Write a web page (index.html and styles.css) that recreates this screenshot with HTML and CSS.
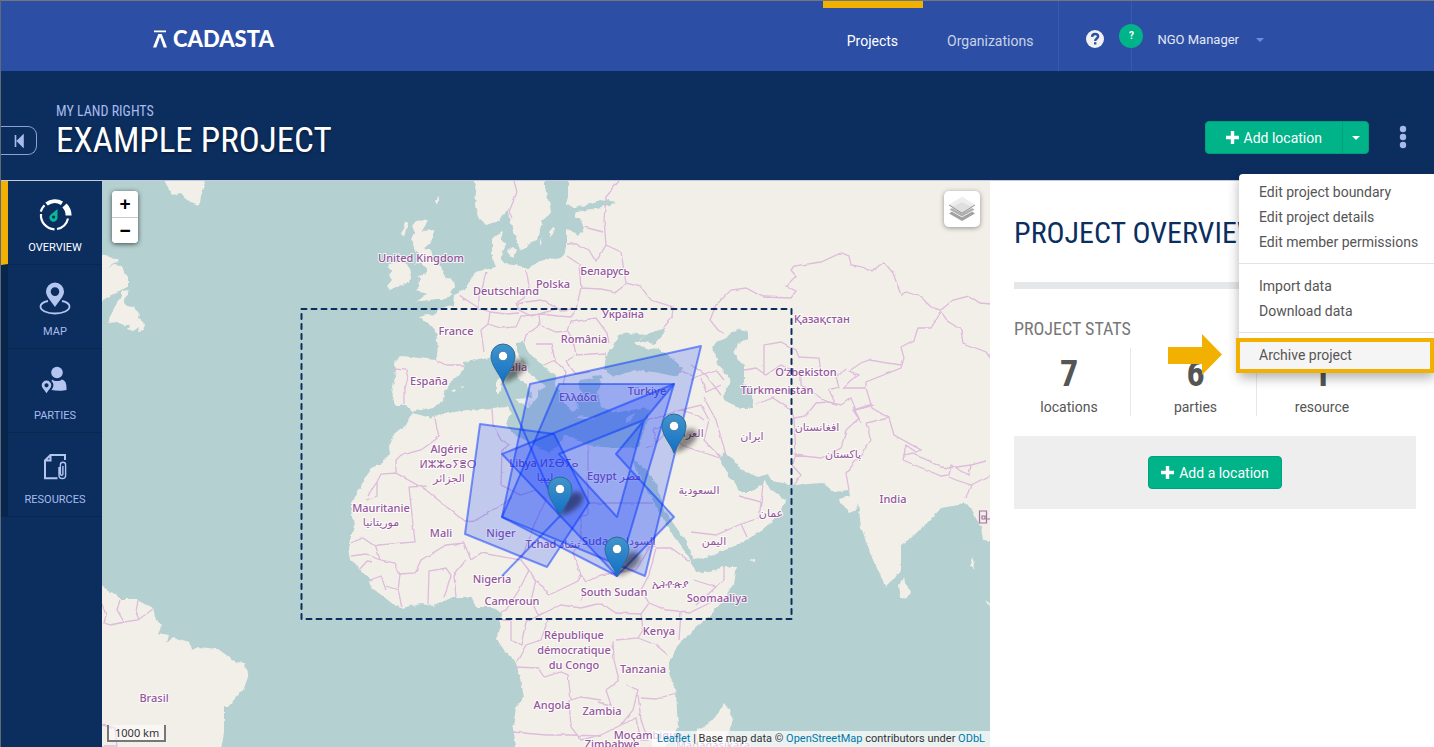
FILE: index.html
```html
<!DOCTYPE html>
<html lang="en">
<head>
<meta charset="utf-8">
<title>Example Project</title>
<link rel="stylesheet" href="styles.css">
</head>
<body>
<header class="topbar">
  <a class="logo" href="#">
    <svg width="14" height="18" viewBox="0 0 14 18" aria-hidden="true"><path d="M1 .5h12v1.800H1zM0 17.500 5.300 4h3.400L14 17.500h-3.300L7 7 3.300 17.500z" fill="#fff"/></svg>
    <span>CADASTA</span>
  </a>
  <nav class="nav">
    <a class="nav-link active" href="#">Projects</a>
    <a class="nav-link" href="#">Organizations</a>
    <a class="help" href="#" aria-label="Help"><svg width="18" height="18" viewBox="0 0 18 18"><circle cx="9" cy="9" r="9" fill="#f1f1f1"/><path d="M6 6.900C6.200 4.800 7.500 4 9.100 4c1.800 0 3 1 3 2.500C12.100 8.500 9.200 8.500 9.200 11" fill="none" stroke="#2c4fa5" stroke-width="2.400"/><path d="M8 12.200h2.400v2.300H8z" fill="#2c4fa5"/></svg></a>
    <a class="user" href="#"><span class="avatar">?</span><span class="user-name">NGO Manager</span><span class="caret"></span></a>
  </nav>
</header>

<section class="project-bar">
  <button class="collapse" aria-label="Collapse"><svg width="10" height="14" viewBox="0 0 10 14"><path d="M1.500 1v12M9 1.500 3.500 7 9 12.500z" fill="#a9bbec" stroke="#a9bbec" stroke-width="1.600"/></svg></button>
  <div class="project-title">
    <a class="org" href="#">MY LAND RIGHTS</a>
    <h1>EXAMPLE PROJECT</h1>
  </div>
  <div class="split">
    <button class="btn"><svg class="plus" width="13" height="13" viewBox="0 0 13 13"><path d="M6.500 0v13M0 6.500h13" stroke="#fff" stroke-width="3.400"/></svg>Add location</button>
    <button class="btn toggle" aria-label="More locations"><span class="caret white"></span></button>
  </div>
  <button class="more" aria-label="Project options"><svg width="8" height="24" viewBox="0 0 8 24" fill="#a9b8ea"><circle cx="4" cy="4" r="3.200"/><circle cx="4" cy="12" r="3.200"/><circle cx="4" cy="20" r="3.200"/></svg></button>
  <div class="menu">
    <a href="#">Edit project boundary</a>
    <a href="#">Edit project details</a>
    <a href="#">Edit member permissions</a>
    <hr>
    <a href="#">Import data</a>
    <a href="#">Download data</a>
    <hr>
    <a class="archive" href="#">Archive project</a>
    <svg class="arrow" width="56" height="42" viewBox="0 0 56 42"><path d="M0 13h34V0l20 20.500L34 41V30H0z" fill="#f2b100"/></svg>
  </div>
</section>

<main class="main">
  <nav class="side">
    <a class="side-link active" href="#">
      <svg width="36" height="36" viewBox="0 0 36 36" fill="none" stroke="#fff" stroke-width="2.200"><path d="M3.800 14.600A14.600 14.600 0 0 1 7.500 8.200" stroke-width="2.200"/><path d="M9.500 7A14 14 0 0 1 25 6.200" stroke-width="4"/><path d="M27.500 8.500A14 14 0 0 1 31.600 18.500" stroke-width="6"/><path d="M31 21.500A14 14 0 0 1 20 32M17.500 32.300A14 14 0 0 1 4 17"/><path d="M20.500 12v8.500a4.100 4.100 0 1 1-7.200-2.600z" fill="#0cb795" stroke="none"/><circle cx="16.600" cy="20" r="1.600" fill="#0b2e5f" stroke="none"/></svg>
      <span>OVERVIEW</span>
    </a>
    <a class="side-link" href="#">
      <svg width="36" height="36" viewBox="0 0 36 36"><path fill-rule="evenodd" d="M18 1.500a9 9 0 0 1 9 9c0 5-5.500 10-9 15.500-3.500-5.500-9-10.500-9-15.500a9 9 0 0 1 9-9zm0 4.800a4.300 4.300 0 1 0 0 8.600 4.300 4.300 0 0 0 0-8.600z" fill="#b4c5f0"/><path d="M11 20c-4.500 1-7.500 3-7.500 5.500 0 4 6.500 7 14.500 7s14.500-3 14.500-7c0-2.500-3-4.500-7.500-5.500" fill="none" stroke="#b4c5f0" stroke-width="1.800"/></svg>
      <span>MAP</span>
    </a>
    <a class="side-link" href="#">
      <svg width="36" height="36" viewBox="0 0 36 36" fill="#b4c5f0"><circle cx="20" cy="7.500" r="5.800"/><path d="M15 14.500c2.500 2 7.500 2 10 0 3 .7 4.500 3.500 4.500 8V25c-4 1-10 1-15 0 2-3 3-6 0-9z"/><path fill-rule="evenodd" d="M9.500 15.500a4.800 4.800 0 0 1 4.800 4.800c0 2.500-3 5-4.800 8-1.800-3-4.800-5.500-4.800-8a4.800 4.800 0 0 1 4.800-4.800zm0 2.700a2.100 2.100 0 1 0 0 4.200 2.100 2.100 0 0 0 0-4.200z"/></svg>
      <span>PARTIES</span>
    </a>
    <a class="side-link" href="#">
      <svg width="36" height="36" viewBox="0 0 36 36" fill="none" stroke="#b4c5f0"><path d="M28 11V6H13.500L8 11.500V29.300h12.500M13.500 6v5.500H8" stroke-width="2"/><path d="M22 18v8.200a3.300 3.300 0 0 0 6.600 0V15.800a2.600 2.600 0 0 0-5.200 0V25a1.200 1.200 0 0 0 2.500 0v-8" stroke-width="1.400"/></svg>
      <span>RESOURCES</span>
    </a>
  </nav>

  <div class="map">
    <svg class="tiles" viewBox="101 181 888 566" preserveAspectRatio="xMinYMin slice" role="img" aria-label="Project map">
      <defs>
        <filter id="coast" x="0" y="0" width="100%" height="100%"><feTurbulence type="fractalNoise" baseFrequency=".16" numOctaves="2" seed="4" result="n"/><feDisplacementMap in="SourceGraphic" in2="n" scale="4" xChannelSelector="R" yChannelSelector="G"/></filter>
        <filter id="border" x="0" y="0" width="100%" height="100%"><feTurbulence type="fractalNoise" baseFrequency=".12" numOctaves="1" seed="4" result="n"/><feDisplacementMap in="SourceGraphic" in2="n" scale="3" xChannelSelector="R" yChannelSelector="G"/></filter>
        <filter id="soft" x="-50%" y="-50%" width="200%" height="200%"><feGaussianBlur stdDeviation="2.500"/></filter>
        <linearGradient id="pin" x1="0" y1="0" x2="0" y2="1"><stop offset="0" stop-color="#4095cb"/><stop offset="1" stop-color="#126fc6"/></linearGradient>
        <g id="marker"><path d="M0 0 5-16C9-25 22-27 23-19 23-10 9-2 0 0z" fill="#000" opacity=".45" filter="url(#soft)"/><path d="M0 0C-3-9-12-17-12-27a12 12 0 0 1 24 0C12-17 3-9 0 0z" fill="url(#pin)" stroke="#2e6c97" stroke-width="1"/><circle cy="-27" r="4.700" fill="#fff" stroke="#2e6c97" stroke-width=".8"/></g>
      </defs>
      <rect x="0" y="80" width="1500" height="900" fill="#b5d0d0"/>
      <g fill="#f2efe9" filter="url(#coast)">
        <path d="M163 175 168 190 172 195 180 193 187 201 196 206 199 203 200 196 203 187 206 175z"/>
        <path d="M95 254 110 256 118 261 106 268 102 270 113 265 120 266 127 278 127 287 118 292 112 294 95 304z"/>
        <path d="M122 291 128 290 122 300 126 306 131 307 136 311 138 313 137 318 143 323 144 325 142 331 137 332 138 326 131 331 127 329 130 325 123 325 115 322 107 323 110 314 116 305z"/>
        <path d="M388 264 398 262 407 264 410 272 408 283 397 286 389 290 386 286 391 280 388 275 392 270 387 268z"/>
        <path d="M415 221 427 220 424 226 421 231 433 230 433 236 429 244 423 249 430 250 432 257 437 263 441 270 444 277 446 279 453 280 454 286 449 292 452 295 445 299 436 299 428 300 421 301 414 303 420 298 426 294 418 291 413 290 418 286 419 281 417 276 425 274 426 268 421 262 414 265 418 259 417 254 413 249 412 242 410 238 414 233 411 226zM404 222l4-1-3 8-2 7-2-4zM434 201l4-6v6l-2 4z"/>
        <path d="M472 175 475 192 474 205 477 218 485 225 495 222 503 215 507 208 509 217 511 229 516 240 519 250 525 248 528 243 536 240 539 229 542 220 550 213 549 205 546 196 544 188 544 175z"/>
        <path d="M506 250l6-3 4 4-3 7-5-2zM548 232l5-6-1 8-3 3zM539 238l2 6-2 2z"/>
        <path d="M567 175 567 197 565 203 573 208 593 203 605 199 614 203 600 207 585 210 573 213 573 217 580 220 583 229 578 236 573 232 566 229 566 243 563 255 555 260 545 259 533 264 527 269 519 266 505 264 500 258 503 250 505 243 500 240 502 231 495 234 491 240 491 257 495 267 483 270 474 272 470 280 464 290 453 295 452 305 437 309 435 314 427 315 418 317 427 323 435 332 437 347 435 360 410 357 400 356 393 362 395 370 391 393 394 405 405 405 410 412 420 410 433 407 442 400 443 393 450 382 463 370 462 362 477 360 488 358 497 352 503 360 510 366 518 378 525 385 531 393 528 407 537 397 537 390 545 387 530 375 522 365 515 350 515 343 523 342 528 353 543 367 555 377 555 385 560 397 567 407 572 413 577 407 573 398 582 397 578 385 578 380 586 379 597 377 600 382 597 393 600 407 613 413 630 410 640 408 648 410 646 420 642 433 638 447 620 448 600 447 587 445 573 438 563 435 558 447 547 452 533 445 522 440 510 433 505 423 510 413 507 407 492 408 467 410 447 413 430 418 412 413 405 425 393 435 388 447 389 453 382 463 370 468 362 483 350 503 350 510 353 525 347 548 349 560 358 568 369 580 371 588 383 597 393 605 401 608 420 604 433 606 452 597 470 597 475 607 492 607 500 613 499 627 495 638 503 650 515 663 520 682 523 697 515 708 512 727 520 780 660 780 665 745 677 727 675 693 668 673 668 662 678 643 698 625 707 618 720 603 733 583 736 567 723 567 703 573 695 572 688 557 673 537 663 520 650 497 638 477 632 458 645 470 657 487 663 510 677 530 688 547 693 560 713 555 740 543 762 530 773 520 785 502 778 495 768 488 765 480 758 487 750 492 738 492 733 480 728 477 718 457 723 452 733 460 740 470 757 477 767 474 770 481 793 485 822 483 833 492 848 490 849 496 838 499 848 513 855 510 857 503 860 527 872 560 885 587 892 580 900 570 900 545 910 538 927 522 940 508 957 505 965 502 973 515 980 527 982 540 1000 542 1500 560 1500 100 567 100z"/>
        <path d="M95 583 112 593 120 599 135 599 152 608 155 620 161 625 157 633 168 635 166 643 172 637 188 642 191 650 197 647 217 649 235 662 243 663 247 677 243 688 227 707 223 707 223 733 215 780 95 780z"/>
        <path d="M723 703 728 710 732 720 730 726 727 732 718 780 690 780 697 730 710 722 718 712z"/>
        <path d="M902 578 910 592 907 598 899 597 898 584z"/>
        <path d="M496 379l5-1-1 13-4 2zM515 399l15-1-3 10zM577 416l16 2-1 2-14-2zM625 418l10-4-5 6-5 2zM449 391l4-2 1 3zM459 387l4-1-1 2zM972 556l2 8-1 5-3-2zM748 560l6-1v3zM985 600l6 4v6z"/>
      </g>
      <g fill="#b5d0d0" filter="url(#coast)">
        <path d="M618 335 612 345 605 357 603 370 613 377 633 370 653 372 677 377 682 368 667 355 653 347 647 350 633 343 645 335 627 333z"/>
        <path d="M637 341 645 335 663 328 664 333 654 344z"/>
        <path d="M735 329 747 332 747 340 737 343 735 350 732 352 740 363 743 365 743 383 750 387 752 407 740 409 723 400 724 388 730 382 717 363 714 354 711 349 715 342 727 337z"/>
        <path d="M591 376l9-1 2 3-8 2z"/>
      </g>
      <g fill="none" stroke="#dfbbdc" stroke-width="1.300" filter="url(#border)">
        <path d="M513 181 516 192 508 212 511 218M618 181 605 197 603 220 605 245 595 262 588 250 575 244 566 244M583 227 602 232M605 245 620 252 622 265 625 283 640 287 650 300 672 307 671 318 662 328M566 256 578 264 580 288 575 309 560 310 540 300 525 302 516 304M525 270 528 286 523 298 515 303 518 310 530 316 545 312 555 309M485 272 482 285 478 295 478 308 489 312 487 324 480 330 483 352M458 295 470 303 478 308M487 324 500 328 515 327 520 316 540 314 557 316 570 317 575 310M580 288 600 289 615 292 625 284M489 312 505 314 518 313M538 314 539 325 525 335 523 342M541 326 555 332 567 331 570 322 595 318 606 333 608 343M567 331 573 345 575 355 605 353M535 344 550 344 554 360 543 365M554 360 565 372 562 385M573 355 565 362 575 374 590 372M435 360 445 365 462 365M393 369 405 370 407 378 403 390 403 404M491 408 492 425 500 440 508 445 501 450 500 485 520 495 535 490 545 500 533 525 520 560M434 419 438 437 420 450 400 455 395 460 395 473 425 490 463 521 475 520 500 505 512 497M425 486 408 487 414 542 378 545 373 546M395 473 380 474 376 482 367 495M376 482 376 496 365 500M350 543 362 538 375 547 379 560 394 563 399 575 397 590 401 607M350 556 365 554 379 560M358 570 366 561 371 562M369 580 380 576 385 590M385 586 397 590M399 574 414 573 420 560 445 545 463 543 470 560 480 553 520 560 528 570 518 590 505 610 500 612M427 604 428 571 445 568 450 575 443 598M455 597 453 575 465 560M587 446 587 515M587 503 651 503M587 515 580 516 580 540 572 553 580 575 585 582 600 575 620 572 635 570 640 562 650 545 655 545M535 580 548 595 575 582 580 575M535 580 520 560M535 580 530 600 537 615 545 612 560 605 580 608 600 603 615 613 640 614 642 630 637 638 615 640M580 600 582 590M640 614 648 603 665 610 690 612 715 600M648 603 640 590 648 575 655 548 670 548 690 562M680 612 678 640M637 638 655 645 667 655M612 640 613 660 618 680 605 690 610 705 597 702M515 667 537 668 543 677 560 672 567 675 570 700 580 697 600 700M568 700 570 727 580 740 600 735 620 725 632 710 637 690 625 685M512 732 545 735 570 735 600 736M620 725 635 718 640 740 647 740 640 720 637 695M640 698 655 699 675 693M500 620 510 620 510 640 520 645 525 622 545 612M515 663 525 645 540 640 547 620"/>
        <path d="M643 420 655 418 680 410 696 415 703 420M645 448 655 443 652 430 665 425M655 443 668 430 680 445 700 452 725 460M680 410 700 405 708 420 703 440 720 458M703 398 715 420 725 455M690 380 700 375 715 370 723 380M690 365 705 375 720 395M700 378 705 392 720 385M675 369 692 376M755 404 772 398 790 410 793 418 795 455 791 465 800 475 793 485M793 418 805 416 815 403 828 402 840 405 850 398 855 410 873 405M793 455 820 458 840 448 845 430 858 418 852 407M723 334 717 330 709 320 715 305 730 290 745 288 762 297 790 298 795 291 785 286 795 276 790 270 793 266 820 262 840 253 848 256 850 265 862 267 870 272 883 262 892 273 900 295 905 292 920 297 930 307 940 310 952 300 968 296 979 303 990 304M940 310 945 320 960 330 962 343 985 352 990 359M940 312 930 328 917 328 913 340 900 347 903 358 900 368 865 382 865 388 871 408 888 418 893 435 920 450 915 452 905 445 902 460M871 404 852 410 860 422M865 388 842 388 850 380 858 375 848 371 860 363 868 360 900 365M763 375 763 345 780 342 795 350 798 357 818 358 820 375M743 370 755 368 765 375 780 365 800 375 800 385 823 400 835 405 828 390 838 387 835 378 845 368M888 418 865 423 870 440 860 455 845 473 848 490M902 460 940 476 948 475 950 465 968 475 970 465 985 461M902 455 912 453 940 467 948 468 970 465M948 477 955 480 970 485 965 498M970 485 990 475M690 532 715 535 740 524 758 518 760 502 738 496M740 524 746 537M760 502 762 485M693 580 715 587 723 580 723 567M715 587 695 605M101 604 105 615 103 623 110 625 123 622 137 620 152 609M119 600 116 610 123 622M137 600 135 612 138 620M101 725 114 728 116 747M101 746 115 746"/>
      </g>
      <g class="places">
        <text x="420" y="262">United Kingdom</text><text x="505" y="295">Deutschland</text><text x="552" y="288">Polska</text><text x="604" y="275">Беларусь</text><text x="622" y="318">Україна</text><text x="821" y="323">Қазақстан</text><text x="455" y="335">France</text><text x="583" y="343">România</text><text x="513" y="371">Italia</text><text x="428" y="385">España</text><text x="577" y="401">Ελλάδα</text><text x="646" y="395">Türkiye</text><text x="805" y="376">Oʻzbekiston</text><text x="776" y="394">Türkmenistan</text><text x="688" y="437">العراق</text><text x="751" y="440">ایران</text><text x="816" y="431">افغانستان</text><text x="842" y="458">پاکستان</text><text x="448" y="453">Algérie</text><text x="447" y="468">ⵍⵣⵣⴰⵢⴻⵔ</text><text x="448" y="482">الجزائر</text><text x="543" y="467">Libya ⵍⵉⴱⵢⴰ</text><text x="544" y="481">ليبيا</text><text x="613" y="480">Egypt مصر</text><text x="698" y="494">السعودية</text><text x="770" y="517">عمان</text><text x="713" y="545">اليمن</text><text x="892" y="503">India</text><text x="380" y="512">Mauritanie</text><text x="380" y="526">موريتانيا</text><text x="440" y="537">Mali</text><text x="500" y="537">Niger</text><text x="552" y="548">Tchad تشاد</text><text x="618" y="545">Sudan السودان</text><text x="491" y="583">Nigeria</text><text x="511" y="605">Cameroun</text><text x="613" y="596">South Sudan</text><text x="669" y="588">ኢትዮጵያ</text><text x="716" y="602">Soomaaliya</text><text x="658" y="635">Kenya</text><text x="573" y="639">République</text><text x="573" y="654">démocratique</text><text x="573" y="669">du Congo</text><text x="642" y="673">Tanzania</text><text x="551" y="709">Angola</text><text x="601" y="715">Zambia</text><text x="647" y="739">Moçambique</text><text x="611" y="748">Zimbabwe</text><text x="153" y="702">Brasil</text><text x="712" y="749">Madagasikara</text>
      </g>
      <path d="M978.500 511h7v12h-7zM981 516h3v3h-3zM985 519h5" fill="none" stroke="#a272a2" stroke-width="1.200"/>
      <rect x="300.500" y="309" width="490" height="310" fill="none" stroke="#0b2e5f" stroke-width="2" stroke-linecap="round" stroke-dasharray="5 5"/>
      <g fill="#03f" fill-opacity=".2" stroke="#03f" stroke-opacity=".5" stroke-width="2" stroke-linejoin="round">
        <path d="M529 384 700 346 644 576 501 517z"/>
        <path d="M558 384H673L616 576 501 517z"/>
        <path fill-rule="evenodd" d="M673 384 501 454 616 576 673 517 615 454zM643 420 558 454 616 517z"/>
        <path d="M479 424 553 434 588 503 546 567 464 534z"/>
        <path d="M502 383 559 516 501 576" fill="none"/>
      </g>
      <use href="#marker" x="502" y="383"/><use href="#marker" x="673" y="453"/><use href="#marker" x="559" y="516"/><use href="#marker" x="616" y="576"/>
    </svg>
    <div class="map-top">
      <div class="zoom"><button aria-label="Zoom in">+</button><button aria-label="Zoom out">−</button></div>
      <button class="layers" aria-label="Layers"><svg width="28" height="28" viewBox="0 0 28 28"><path d="M1 18.500 14 26l13-7.500-3-2-10 5.500-10-5.500z" fill="#a0a0a0"/><path d="M1 14.700 14 22l13-7.300-3-2-10 5.500-10-5.500z" fill="#b0b0b0" stroke="#fff" stroke-width=".6"/><path d="M1 10 14 2l13 8-13 8.500z" fill="#dfdfdf"/><path d="M1 10 14 2l13 8-5 1-8-4-8 4z" fill="#eee"/><path d="m1 10 13 8.200L27 10" fill="none" stroke="#929292"/></svg></button>
    </div>
    <div class="map-bottom">
      <div class="scale">1000 km</div>
      <div class="attribution"><a href="#">Leaflet</a> | Base map data © <a href="#">OpenStreetMap</a> contributors under <a href="#">ODbL</a></div>
    </div>
  </div>

  <aside class="panel">
    <h2>PROJECT OVERVIEW</h2>
    <div class="rule"></div>
    <h3>PROJECT STATS</h3>
    <div class="stats">
      <div class="stat"><strong>7</strong><span>locations</span></div>
      <div class="stat"><strong>6</strong><span>parties</span></div>
      <div class="stat"><strong>1</strong><span>resource</span></div>
    </div>
    <div class="callout"><button class="btn"><svg class="plus" width="13" height="13" viewBox="0 0 13 13"><path d="M6.500 0v13M0 6.500h13" stroke="#fff" stroke-width="3.400"/></svg>Add a location</button></div>
  </aside>
</main>
</body>
</html>
```
FILE: styles.css
```css
* { box-sizing: border-box; }
body {
  margin: 0;
  height: 100vh;
  display: flex;
  flex-direction: column;
  overflow: hidden;
  border-top: 1px solid #74777a;
  border-left: 1px solid #5e6a78;
  font: 14px/20px Roboto, sans-serif;
  color: #555;
  background: #fff;
}
a { color: inherit; text-decoration: none; }
button { font: inherit; cursor: pointer; padding: 0; }
h1, h2, h3 { margin: 0; font-family: "Roboto Condensed", "Liberation Sans Narrow", sans-serif; font-weight: 400; }
svg { display: block; flex: none; }

.topbar {
  flex: none;
  height: 70px;
  display: flex;
  justify-content: space-between;
  padding: 0 170px 0 152px;
  background: #2c4fa5;
}
.logo {
  display: flex;
  align-items: center;
  gap: 6px;
  padding-top: 5px;
  color: #fff;
  font: 900 22px/24px Lato, sans-serif;
}
.nav { display: flex; color: #fff; }
.nav-link {
  padding: 30px 25px 0 24px;
  border-top: 0 solid #f2b100;
  color: #c9d2e8;
}
.nav-link.active { border-top-width: 7px; padding-top: 23px; color: #fff; }
.help {
  display: flex;
  justify-content: center;
  width: 74px;
  padding-top: 29px;
  border-left: 1px solid #365bb0;
  border-right: 1px solid #365bb0;
}
.user { display: flex; padding-top: 23px; margin-left: -13px; color: #e3e8f4; }
.avatar {
  width: 24px;
  height: 24px;
  border-radius: 50%;
  background: #00b388;
  color: #fff;
  font: 700 10px/24px Roboto, sans-serif;
  text-align: center;
}
.user-name { margin: 6px 17px 0 14px; font-size: 13px; }
.caret {
  align-self: flex-start;
  margin-top: 14px;
  border: 4px solid transparent;
  border-top-color: #6f8fdc;
  border-bottom: 0;
}
.caret.white { align-self: center; margin: 0; border-top-color: #fff; }

.project-bar {
  flex: none;
  position: relative;
  z-index: 2;
  display: flex;
  height: 110px;
  border-bottom: 1px solid #c3cadb;
  background: #0b2e5f;
}
.collapse {
  display: flex;
  align-items: center;
  justify-content: center;
  width: 36px;
  height: 29px;
  margin-top: 55px;
  border: 1px solid #8da2d4;
  border-left: 0;
  border-radius: 0 9px 9px 0;
  background: none;
}
.project-title { flex: 1; padding: 30px 0 0 19px; }
.org { display: block; font: 14px/20px "Roboto Condensed", "Liberation Sans Narrow", sans-serif; color: #a9bbec; }
h1 { font-size: 35px; line-height: 40px; color: #fff; text-shadow: 0 1px 3px rgba(0, 0, 0, .5); }
.split { display: flex; margin-top: 50px; height: 33px; }
.btn {
  display: flex;
  align-items: center;
  justify-content: center;
  height: 33px;
  padding: 0 20px;
  border: 1px solid #00a17a;
  border-radius: 4px;
  background: #00b388;
  color: #fff;
}
.plus { margin-right: 5px; }
.split .btn:first-child { border-radius: 4px 0 0 4px; }
.split .toggle { width: 27px; padding: 0; margin-left: -1px; border-radius: 0 4px 4px 0; }
.more { width: 62px; height: 33px; margin: 49px 0 0 3px; display: flex; align-items: center; justify-content: center; border: 0; background: none; }
.menu {
  position: absolute;
  top: 103px;
  right: 0;
  width: 195px;
  padding: 6px 0 0;
  border-radius: 4px 0 0 0;
  background: #fff;
  box-shadow: 0 5px 12px rgba(0, 0, 0, .3);
}
.menu a { display: block; padding: 0 20px; line-height: 25px; white-space: nowrap; }
.menu hr { height: 1px; margin: 8px 0 10px; border: 0; background: #e3e3e3; }
.menu .archive { margin: -5px 0 0 -3px; padding: 0 19px; border: 4px solid #f2b100; background: #f5f5f5; line-height: 27px; }
.arrow { position: absolute; left: -71px; bottom: -3px; }

.main { flex: 1; min-height: 0; display: flex; }
.side { width: 101px; flex: none; background: #0b2e5f; }
.side-link {
  display: flex;
  flex-direction: column;
  align-items: center;
  gap: 5px;
  height: 84px;
  padding-top: 16px;
  border-left: 7px solid #08254b;
  border-bottom: 1px solid #0a2750;
  color: #a9bbec;
  font-size: 11px;
}
.side-link.active { border-left-color: #f2b100; color: #fff; }

.map { position: relative; flex: 2 1 0; min-width: 0; display: flex; flex-direction: column; justify-content: space-between; overflow: hidden; }
.tiles { position: absolute; inset: 0; width: 100%; height: 100%; }
.places { font: 500 11px "Noto Sans", "DejaVu Sans", sans-serif; text-anchor: middle; fill: #94559a; stroke: #fff; stroke-opacity: .8; stroke-width: 2px; paint-order: stroke; }
.map-top, .map-bottom { position: relative; display: flex; justify-content: space-between; }
.map-top { padding: 10px; align-items: flex-start; }
.zoom { display: flex; flex-direction: column; width: 26px; border-radius: 4px; overflow: hidden; background: #fff; box-shadow: 0 1px 5px rgba(0, 0, 0, .65); }
.zoom button { height: 26px; border: 0; background: #fff; color: #000; font: bold 19px/24px "Liberation Sans", sans-serif; }
.zoom button + button { border-top: 1px solid #ccc; }
.layers { display: flex; align-items: center; justify-content: center; width: 36px; height: 36px; border: 0; border-radius: 5px; background: #fff; box-shadow: 0 1px 5px rgba(0, 0, 0, .4); }
.map-bottom { align-items: flex-end; padding-left: 5px; font-size: 11px; line-height: 16px; color: #333; }
.scale { width: 59px; margin-bottom: 5px; padding: 0 0 0 6px; border: 2px solid #777; border-top: 0; background: rgba(255, 255, 255, .5); font: 11px/15px "Noto Sans", sans-serif; }
.attribution { padding: 0 5px; background: rgba(255, 255, 255, .7); }
.attribution a { color: #0078a8; }

.panel { flex: 0 1 444px; padding: 36px 18px 0 24px; background: #fff; }
h2 { font-size: 30px; line-height: 32px; color: #0b2e5f; white-space: nowrap; }
.rule { height: 7px; margin: 33px 0 29px; background: #e6e7e8; }
h3 { font-size: 18px; line-height: 22px; color: #777; }
.stats { display: grid; grid-template-columns: 117px 126px 126px; margin: 8px 0 20px; }
.stat { height: 68px; padding-left: 4px; border-right: 1px solid #e8e8e8; text-align: center; }
.stat:first-child { padding: 0 6px 0 0; }
.stat:last-child { border: 0; }
.stat strong { display: block; padding-top: 6px; font: 700 36px/40px "Roboto Condensed", "Liberation Sans Narrow", sans-serif; }
.stat span { display: block; margin-top: 3px; }
.callout { display: flex; justify-content: center; padding: 20px; background: #eee; }
.callout .btn { padding: 0 12px; }
```
